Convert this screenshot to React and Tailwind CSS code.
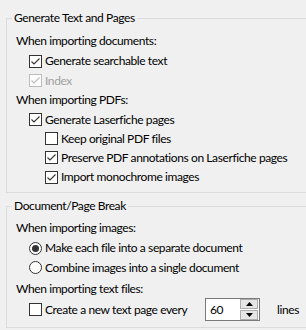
import React from 'react';

const Check = ({ checked, disabled }) => (
  <span
    className={`flex h-[13px] w-[13px] shrink-0 items-center justify-center border ${
      disabled ? 'border-[#bcbcbc] bg-[#fcfcfc]' : 'border-[#333333] bg-white'
    }`}
  >
    {checked && (
      <svg width="11" height="11" viewBox="0 0 11 11">
        <path
          d="M1.5 5.5 L4 8 L9.5 2.5"
          fill="none"
          stroke={disabled ? '#bcbcbc' : '#333333'}
          strokeWidth="1.1"
        />
      </svg>
    )}
  </span>
);

const Radio = ({ checked }) => (
  <span className="flex h-[13px] w-[13px] shrink-0 items-center justify-center rounded-full border border-[#333333] bg-white">
    {checked && <span className="h-[7px] w-[7px] rounded-full bg-[#333333]" />}
  </span>
);

const Row = ({ h = 'h-[20px]', indent, children, className = '' }) => (
  <div className={`flex items-center ${h} ${indent} ${className}`}>{children}</div>
);

const Option = ({ control, label, disabled }) => (
  <>
    {control}
    <span className={`ml-[3px] whitespace-nowrap ${disabled ? 'text-[#a0a0a0]' : 'text-black'}`}>{label}</span>
  </>
);

export default function App() {
  return (
    <div
      className="h-[330px] w-[306px] overflow-hidden bg-[#f0f0f0] text-[12px] leading-[16px] tracking-[-0.4px] text-black"
      style={{ fontFamily: 'Lato, "Noto Sans", sans-serif' }}
    >
      <fieldset className="ml-[6px] mt-[10px] w-[330px] border border-[#dcdcdc] pb-[5px]">
        <legend className="ml-[5px] px-[2px] leading-[16px]">Generate Text and Pages</legend>
        <Row indent="pl-[9px]" className="mt-[5px]">When importing documents:</Row>
        <Row indent="pl-[22px]">
          <Option control={<Check checked />} label="Generate searchable text" />
        </Row>
        <Row h="h-[19px]" indent="pl-[22px]">
          <Option control={<Check checked disabled />} label="Index" disabled />
        </Row>
        <Row indent="pl-[9px]">When importing PDFs:</Row>
        <Row h="h-[19px]" indent="pl-[22px]">
          <Option control={<Check checked />} label="Generate Laserfiche pages" />
        </Row>
        <Row h="h-[19px]" indent="pl-[38px]">
          <Option control={<Check />} label="Keep original PDF files" />
        </Row>
        <Row h="h-[19px]" indent="pl-[38px]">
          <Option control={<Check checked />} label="Preserve PDF annotations on Laserfiche pages" />
        </Row>
        <Row indent="pl-[38px]">
          <Option control={<Check checked />} label="Import monochrome images" />
        </Row>
      </fieldset>

      <fieldset className="ml-[6px] mt-[5px] w-[330px] border border-[#dcdcdc] pb-[6px]">
        <legend className="ml-[5px] px-[2px] leading-[16px]">Document/Page Break</legend>
        <Row indent="pl-[9px]" className="mt-[4px]">When importing images:</Row>
        <Row indent="pl-[22px]">
          <Option control={<Radio checked />} label="Make each file into a separate document" />
        </Row>
        <Row h="h-[19px]" indent="pl-[22px]">
          <Option control={<Radio />} label="Combine images into a single document" />
        </Row>
        <Row indent="pl-[9px]" className="mt-[2px]" h="h-[19px]">When importing text files:</Row>
        <Row h="h-[23px]" indent="pl-[22px]">
          <div className="flex w-[176px] items-center">
            <Option control={<Check />} label="Create a new text page every" />
          </div>
          <div className="flex h-[23px] w-[55px] border border-[#7a7a7a] bg-white">
            <span className="flex-1 pl-[4px] leading-[21px]">60</span>
            <div className="flex flex-col pr-[1px]">
              <div className="flex h-[10px] w-[18px] items-center justify-center border border-[#acacac] bg-[#e5e5e5]">
                <svg width="7" height="4" viewBox="0 0 7 4">
                  <path d="M3.5 0 L7 4 L0 4 Z" fill="#000" />
                </svg>
              </div>
              <div className="mt-[1px] flex h-[10px] w-[18px] items-center justify-center border border-[#acacac] bg-[#e5e5e5]">
                <svg width="7" height="4" viewBox="0 0 7 4">
                  <path d="M0 0 L7 0 L3.5 4 Z" fill="#000" />
                </svg>
              </div>
            </div>
          </div>
          <span className="ml-[17px]">lines</span>
        </Row>
      </fieldset>
    </div>
  );
}
